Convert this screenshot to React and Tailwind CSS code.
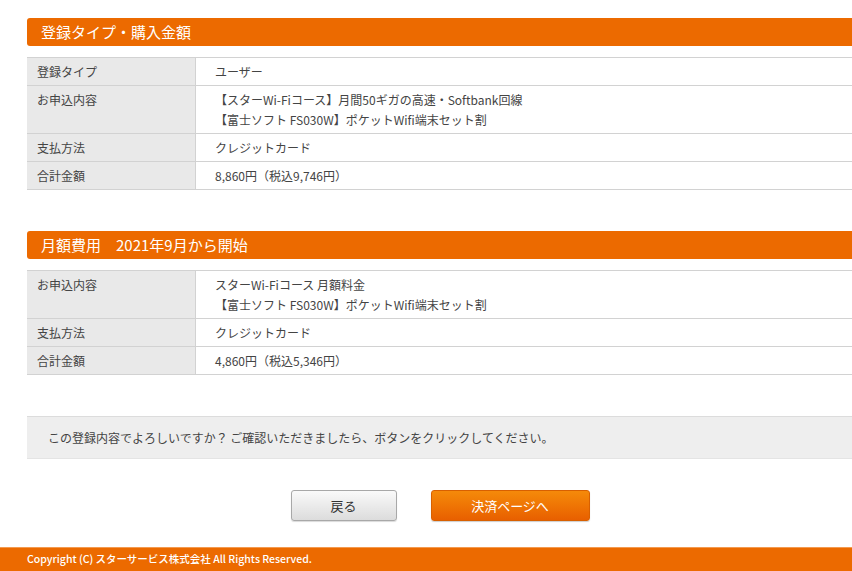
const FONT = { fontFamily: '"Noto Sans CJK JP", "Noto Sans", sans-serif' };

const PURCHASE = [
  { label: "登録タイプ", value: ["ユーザー"] },
  {
    label: "お申込内容",
    value: ["【スターWi-Fiコース】月間50ギガの高速・Softbank回線", "【富士ソフト FS030W】ポケットWifi端末セット割"],
  },
  { label: "支払方法", value: ["クレジットカード"] },
  { label: "合計金額", value: ["8,860円（税込9,746円）"] },
];

const MONTHLY = [
  { label: "お申込内容", value: ["スターWi-Fiコース 月額料金", "【富士ソフト FS030W】ポケットWifi端末セット割"] },
  { label: "支払方法", value: ["クレジットカード"] },
  { label: "合計金額", value: ["4,860円（税込5,346円）"] },
];

function SectionHead({ children }) {
  return (
    <div className="h-[28px] rounded-tl-[3px] rounded-bl-[3px] bg-[#ec6a00] pl-[14px] text-[15px] leading-[28px] text-white">
      {children}
    </div>
  );
}

function InfoTable({ rows }) {
  return (
    <div className="mt-[11px] border-t border-[#d2d2d2]">
      {rows.map((row) => (
        <div key={row.label} className="flex border-b border-[#d2d2d2] text-[12px] leading-[20px] text-[#444]">
          <div className="w-[169px] shrink-0 border-r border-[#d2d2d2] bg-[#e9e9e9] px-[10px] pt-[4px] pb-[3px]">{row.label}</div>
          <div className="flex-1 bg-white pl-[19px] pt-[4px] pb-[3px]">
            {row.value.map((v) => (
              <div key={v}>{v}</div>
            ))}
          </div>
        </div>
      ))}
    </div>
  );
}

export default function App() {
  return (
    <div className="relative h-[571px] w-[852px] overflow-hidden bg-white" style={FONT}>
      <div className="ml-[27px] w-[830px] pt-[18px]">
        <SectionHead>登録タイプ・購入金額</SectionHead>
        <InfoTable rows={PURCHASE} />

        <div className="mt-[41px]">
          <SectionHead>月額費用　2021年9月から開始</SectionHead>
        </div>
        <InfoTable rows={MONTHLY} />

        <div className="mt-[41px] h-[43px] border-t border-[#dcdcdc] border-b border-b-[#e4e4e4] bg-[#eeeeee] pl-[21px] text-[12px] leading-[42px] text-[#444]">
          この登録内容でよろしいですか？ ご確認いただきましたら、ボタンをクリックしてください。
        </div>

        <div className="mt-[31px] flex justify-center gap-[34px] pr-[4px]">
          <button className="h-[31px] w-[106px] rounded-[3px] border border-[#a8a8a8] bg-gradient-to-b from-[#fafafa] to-[#dcdcdc] text-[13px] text-[#333] shadow-[0_1px_1px_rgba(0,0,0,0.15)]">
            戻る
          </button>
          <button className="h-[31px] w-[159px] rounded-[3px] border border-[#d86000] bg-gradient-to-b from-[#f58a0a] to-[#e85f00] text-[13px] text-white shadow-[0_1px_1px_rgba(0,0,0,0.2)]">
            決済ページへ
          </button>
        </div>
      </div>

      <div className="absolute bottom-0 left-0 h-[24px] w-full border-t border-[#f39a50] bg-[#ec6a00] pl-[27px] text-[10.5px] font-medium leading-[21px] text-white">
        Copyright (C) スターサービス株式会社 All Rights Reserved.
      </div>
    </div>
  );
}
